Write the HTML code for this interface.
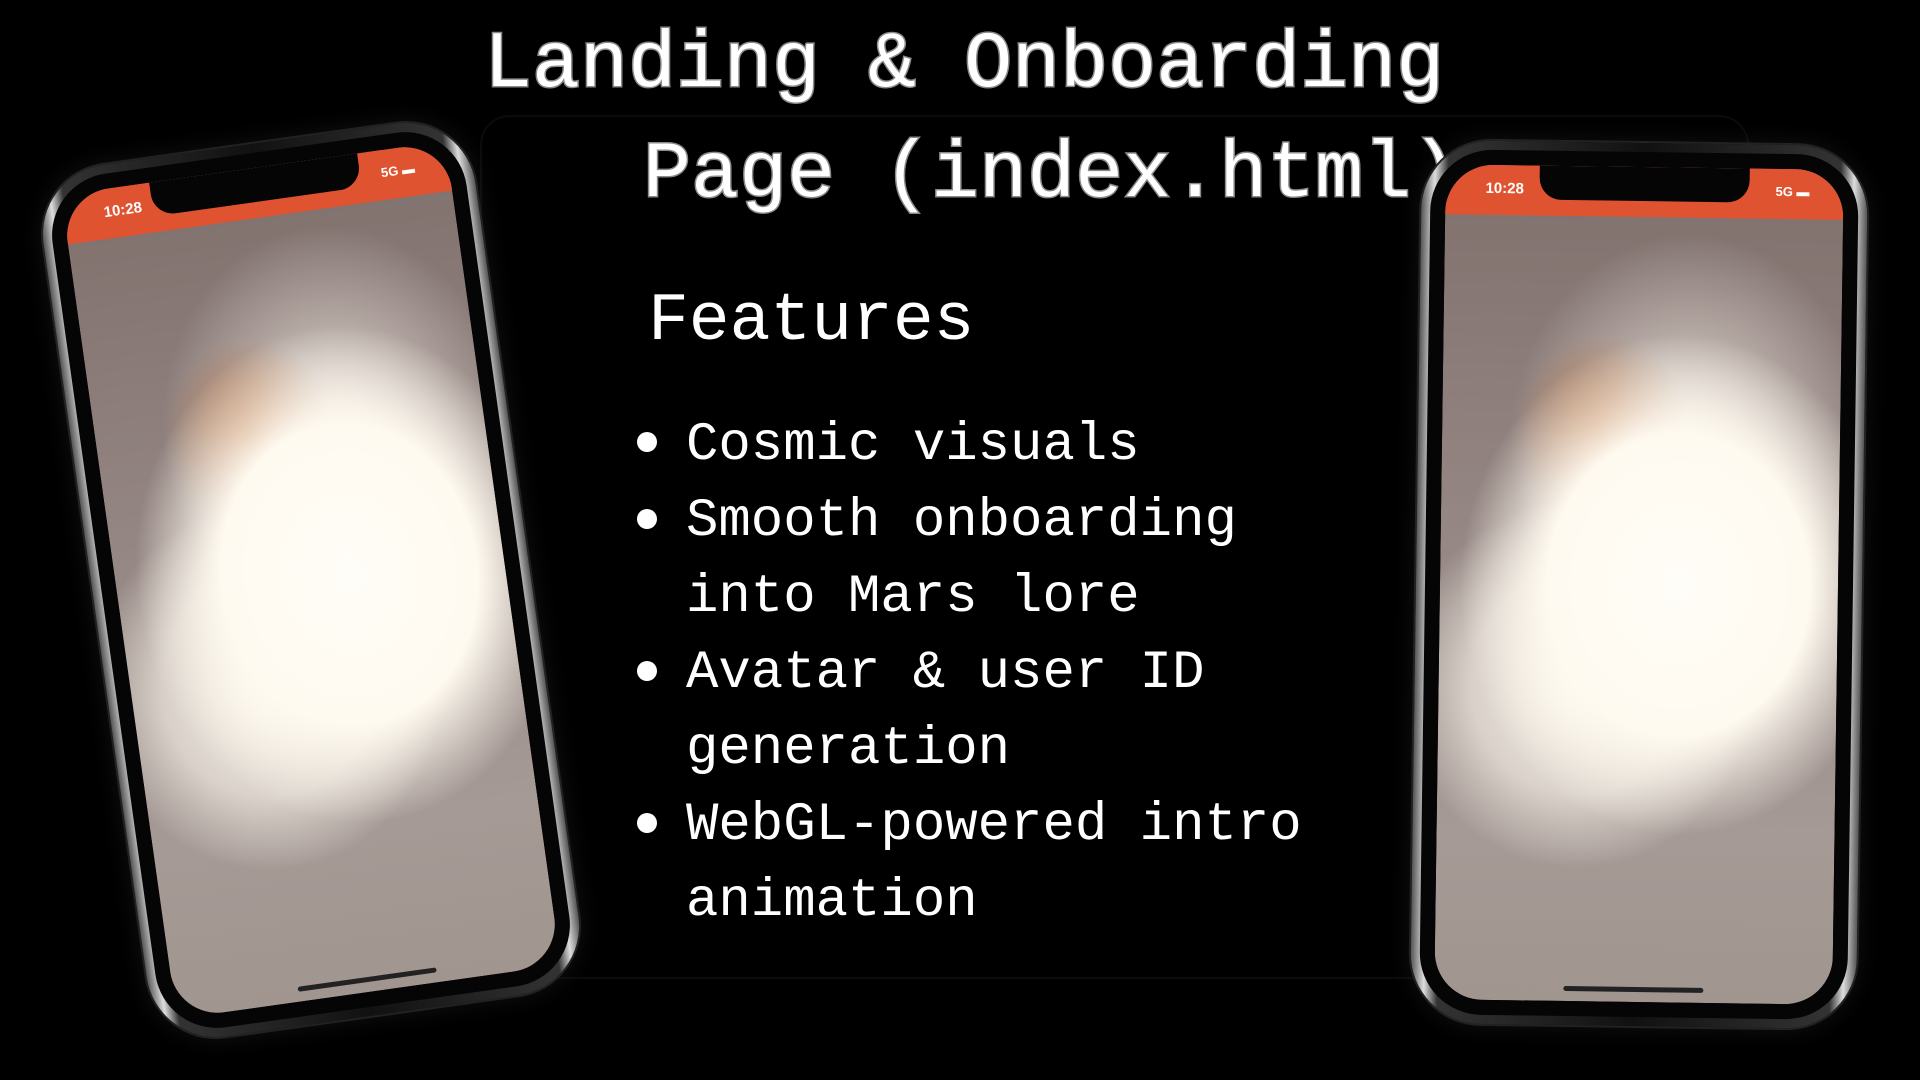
<!DOCTYPE html>
<html><head><meta charset="utf-8"><style>
html,body{margin:0;padding:0;background:#000;width:1920px;height:1080px;overflow:hidden;position:relative;font-family:"Liberation Mono",monospace;}
.t{position:absolute;color:#fff;white-space:nowrap;font-family:"Liberation Mono",monospace;}
.title{font-size:80px;-webkit-text-stroke:3px #8a8a8a;paint-order:stroke fill;}
.feat{font-size:68px;}
.li{font-size:54px;}
.dot{position:absolute;width:20px;height:20px;border-radius:50%;background:#fff;}
.phone{position:absolute;border-radius:70px;background:linear-gradient(90deg,#555,#ddd 3%,#333 6%,#111 50%,#333 94%,#ddd 97%,#555);box-shadow:0 0 0 2px #222,0 0 25px rgba(255,255,255,.08);}
.bez{position:absolute;left:9px;top:9px;right:9px;bottom:9px;border-radius:62px;background:#050505;}
.scr{position:absolute;left:24px;top:24px;right:24px;bottom:24px;border-radius:48px;overflow:hidden;
background:
radial-gradient(ellipse 55% 30% at 60% 50%,#fffdf8 0%,#fffaf0 60%,rgba(255,245,235,0) 100%),
radial-gradient(ellipse 45% 22% at 35% 62%,rgba(255,250,240,.95) 0%,rgba(255,250,240,.6) 60%,rgba(255,250,240,0) 100%),
radial-gradient(ellipse 22% 12% at 40% 32%,rgba(190,120,70,.95) 0%,rgba(170,110,80,0) 100%),
radial-gradient(ellipse 45% 25% at 62% 33%,rgba(240,232,225,.9) 0%,rgba(200,190,185,0) 100%),
linear-gradient(180deg,#7f706c 0%,#8c7d7a 25%,#a69a96 80%,#a1958f 100%);}
.bar{position:absolute;left:0;right:0;top:0;height:50px;background:#e05330;}
.notch{position:absolute;top:0;left:50%;width:210px;margin-left:-105px;height:34px;background:#050505;border-radius:0 0 22px 22px;}
.time{position:absolute;left:40px;top:15px;color:#fff;font:bold 15px "Liberation Sans",sans-serif;}
.sig{position:absolute;right:34px;top:15px;color:#fff;font:bold 13px "Liberation Sans",sans-serif;}
.home{position:absolute;bottom:10px;left:50%;width:140px;margin-left:-70px;height:5px;border-radius:3px;background:#222;}
.panel{position:absolute;border:2px solid #070c0e;border-radius:30px;}
</style></head><body>

<div class="panel" style="left:480px;top:115px;width:1265px;height:860px;"></div>

<div class="t title" style="left:484px;top:20px;">Landing &amp; Onboarding</div>
<div class="t title" style="left:643px;top:130px;">Page (index.html)</div>

<div class="t feat" style="left:648px;top:283px;">Features</div>

<div class="dot" style="left:637px;top:432px;"></div>
<div class="t li" style="left:686px;top:415px;">Cosmic visuals</div>
<div class="dot" style="left:637px;top:509px;"></div>
<div class="t li" style="left:686px;top:491px;">Smooth onboarding</div>
<div class="t li" style="left:686px;top:567px;">into Mars lore</div>
<div class="dot" style="left:637px;top:661px;"></div>
<div class="t li" style="left:686px;top:643px;">Avatar &amp; user ID</div>
<div class="t li" style="left:686px;top:719px;">generation</div>
<div class="dot" style="left:637px;top:813px;"></div>
<div class="t li" style="left:686px;top:795px;">WebGL-powered intro</div>
<div class="t li" style="left:686px;top:871px;">animation</div>

<div class="phone" style="left:93px;top:140px;width:436px;height:880px;transform:rotate(-8deg);">
 <div class="bez"></div>
 <div class="scr"><div class="bar"></div><div class="notch"></div><div class="time">10:28</div><div class="sig">5G ▬</div><div class="home"></div></div>
</div>

<div class="phone" style="left:1416px;top:143px;width:446px;height:883px;transform:rotate(0.8deg);">
 <div class="bez"></div>
 <div class="scr"><div class="bar"></div><div class="notch"></div><div class="time">10:28</div><div class="sig">5G ▬</div><div class="home"></div></div>
</div>

</body></html>
